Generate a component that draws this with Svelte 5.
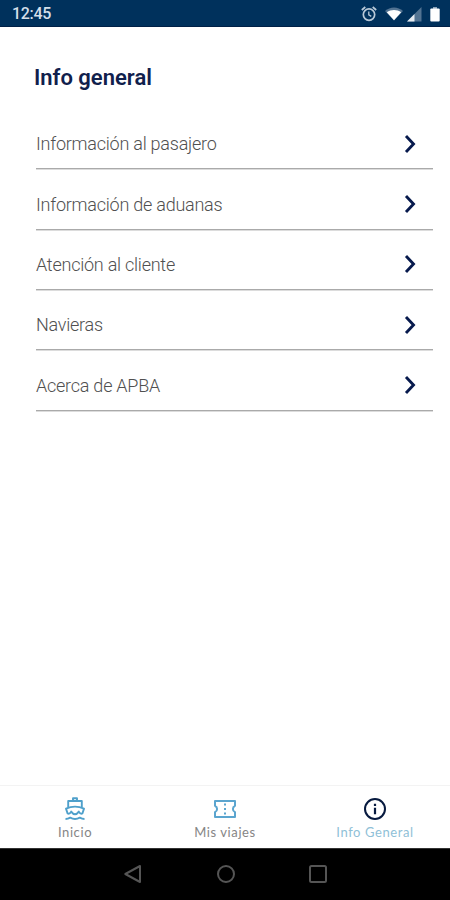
<script lang="ts">
  const items: string[] = [
    'Información al pasajero',
    'Información de aduanas',
    'Atención al cliente',
    'Navieras',
    'Acerca de APBA'
  ];

  const tabs = [
    { id: 'home', label: 'Inicio' },
    { id: 'trips', label: 'Mis viajes' },
    { id: 'info', label: 'Info General' }
  ];

  let active = $state('info');
</script>

<div class="screen">
  <header class="status-bar">
    <span class="clock">12:45</span>
    <div class="status-icons">
      <svg class="alarm" width="16" height="16" viewBox="0 0 16 16" fill="none" stroke="#b9c9d8" stroke-width="1.7">
        <circle cx="8" cy="8.6" r="5.7" />
        <path d="M.8 4 4.3 1M15.2 4 11.7 1" />
        <path d="M7.8 5.5v3.4l2.5 1.5" stroke-width="1.3" />
      </svg>
      <svg class="wifi" width="18" height="14" viewBox="0 0 18 14">
        <path d="M0 4C5-.7 13-.7 18 4L9 13.6Z" fill="#527392" />
        <path d="M1.8 5.2C6 2.2 12 2.2 16.2 5.2L9 13.2Z" fill="#fff" />
      </svg>
      <svg class="signal" width="15" height="15" viewBox="0 0 15 15">
        <path d="M14.5 0v14.5H0Z" fill="#527392" />
        <path d="M7.5 7v7.5H0Z" fill="#e4eaf0" />
      </svg>
      <svg width="10" height="15" viewBox="0 0 10 15">
        <path d="M3 0h4v2H3Z" fill="#8ca3b8" />
        <rect x=".3" y="1.6" width="9.4" height="13" rx="1" fill="#fff" />
      </svg>
    </div>
  </header>

  <main>
    <h1>Info general</h1>
    <ul class="menu">
      {#each items as item}
        <li>
          <button type="button" class="menu-item">
            <span>{item}</span>
            <svg width="12" height="20" viewBox="0 0 12 20" fill="none" stroke="#071a4d" stroke-width="2.9">
              <path d="M2 2 9.5 10 2 18" />
            </svg>
          </button>
        </li>
      {/each}
    </ul>
  </main>

  <nav class="tabs">
    {#each tabs as tab (tab.id)}
      <button type="button" class="tab" class:active={active === tab.id} onclick={() => (active = tab.id)}>
        {#if tab.id === 'home'}
          <svg width="24" height="24" viewBox="0 0 24 24" fill="none" stroke="#4fa0cb" stroke-width="1.9" stroke-linejoin="round">
            <path d="M10 3V1.3h4V3M5.2 10.5V4h13.6V10.5" />
            <path d="M4.6 16.5 3 11.6Q12 7.6 21 11.6L19.4 16.5Q17.4 17.5 15.8 14.6 12 20 8.2 14.6 6.6 17.5 4.6 16.5Z" />
            <path d="M2.5 22q2.4 0 4.7-1.3 4.8 2.6 9.6 0Q19.1 22 21.5 22" />
          </svg>
        {:else if tab.id === 'trips'}
          <svg width="24" height="24" viewBox="0 0 24 24" fill="none" stroke="#5ba5cf" stroke-width="2" stroke-linejoin="round">
            <path d="M2 4H22V8.8A3.5 3.5 0 0 0 22 15.2V20H2V15.2A3.5 3.5 0 0 0 2 8.8Z" />
            <path d="M12 6.5v2M12 11v2M12 15.5v2" />
          </svg>
        {:else}
          <svg width="24" height="24" viewBox="0 0 24 24" fill="none" stroke="#071a3f" stroke-width="2">
            <circle cx="12" cy="12" r="10" />
            <path d="M12 6.8v2.3M12 10.7v6.5" stroke-width="2.2" />
          </svg>
        {/if}
        <span>{tab.label}</span>
      </button>
    {/each}
  </nav>

  <footer class="system-nav">
    <svg width="20" height="20" viewBox="0 0 20 20"><path d="M17 2V18L2.3 10Z" /></svg>
    <svg width="20" height="20" viewBox="0 0 20 20"><circle cx="10" cy="10" r="8" /></svg>
    <svg width="20" height="20" viewBox="0 0 20 20"><rect x="2" y="2" width="16" height="16" rx="1.5" /></svg>
  </footer>
</div>

<style>
  .screen {
    height: 100vh;
    display: flex;
    flex-direction: column;
    background: #fff;
    font-family: Roboto, 'Liberation Sans', sans-serif;
  }

  svg {
    display: block;
    flex: none;
  }

  button {
    appearance: none;
    border: 0;
    padding: 0;
    background: transparent;
    font: inherit;
    cursor: pointer;
  }

  .status-bar {
    height: 27px;
    box-sizing: border-box;
    padding: 1px 10px 0 12px;
    display: flex;
    align-items: center;
    justify-content: space-between;
    background: #00315c;
    border-bottom: 1px solid #002047;
  }

  .clock {
    color: #d5dfe9;
    font-size: 16px;
    font-weight: 500;
    letter-spacing: -0.3px;
  }

  .status-icons {
    padding-top: 1px;
    display: flex;
    align-items: center;
  }

  .alarm {
    margin-right: 8px;
  }

  .wifi {
    margin-right: 4px;
  }

  .signal {
    margin-right: 8px;
  }

  main {
    flex: 1;
    padding: 37px 17px 0 34px;
  }

  h1 {
    margin: 0;
    color: #10204c;
    font-size: 22px;
    font-weight: 600;
    line-height: 28px;
  }

  .menu {
    list-style: none;
    margin: 16.8px 0 0 2px;
    padding: 0;
  }

  .menu li {
    height: 60.4px;
  }

  .menu-item {
    width: 100%;
    height: 60.4px;
    box-sizing: border-box;
    padding: 10.4px 17px 0 0;
    display: flex;
    align-items: center;
    justify-content: space-between;
    border-bottom: 1px solid #aaa;
    box-shadow: 0 1px #dcdcdc;
    color: #505050;
    font-size: 18px;
    font-weight: 300;
    letter-spacing: -0.24px;
  }

  .tabs {
    height: 63px;
    box-sizing: border-box;
    display: flex;
    border-top: 1px solid #f3f3f3;
    background: #fff;
  }

  .tab {
    flex: 1;
    padding-top: 11px;
    display: flex;
    flex-direction: column;
    align-items: center;
    gap: 3px;
    color: #858585;
    font-family: Lato, sans-serif;
    font-size: 13px;
    line-height: 16px;
    letter-spacing: 0.6px;
  }

  .tab.active {
    color: #8fbfd7;
  }

  .system-nav {
    height: 52px;
    box-sizing: border-box;
    padding: 0 0 1px 1px;
    display: flex;
    align-items: center;
    justify-content: center;
    gap: 72.5px;
    background: #000;
    border-top: 1px solid #333;
  }

  .system-nav svg {
    fill: none;
    stroke: #555;
    stroke-width: 2;
    stroke-linejoin: round;
  }
</style>
